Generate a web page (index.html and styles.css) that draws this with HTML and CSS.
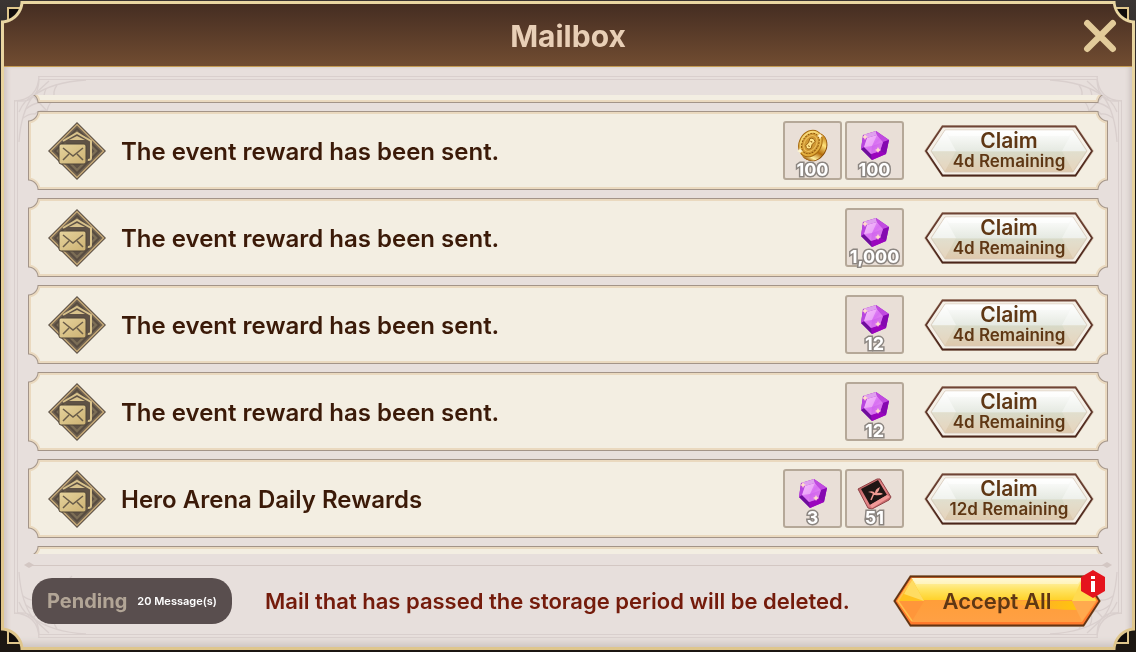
FILE: index.html
```html
<!DOCTYPE html>
<html lang="en">
<head>
    <meta charset="UTF-8">
    <meta name="viewport" content="width=device-width, initial-scale=1.0">
    <title>Mailbox</title>
    <link rel="stylesheet" href="styles.css">
</head>
<body>
    <!-- Shared icons -->
    <svg class="sprite" width="0" height="0" aria-hidden="true">
        <defs>
            <linearGradient id="gold-fill" x1="0" y1="0" x2="1" y2="1">
                <stop offset="0" stop-color="#e6d39d"/>
                <stop offset="1" stop-color="#cdb273"/>
            </linearGradient>
            <linearGradient id="coin-edge" x1="0" y1="0" x2="0" y2="1">
                <stop offset="0" stop-color="#c07a10"/>
                <stop offset="0.3" stop-color="#ffe27a"/>
                <stop offset="0.6" stop-color="#b56d0c"/>
                <stop offset="0.85" stop-color="#fff0a0"/>
                <stop offset="1" stop-color="#9a5606"/>
            </linearGradient>
            <linearGradient id="coin-face" x1="0" y1="0" x2="1" y2="1">
                <stop offset="0" stop-color="#ffe88a"/>
                <stop offset="1" stop-color="#d99a26"/>
            </linearGradient>
            <linearGradient id="gem-face" x1="0" y1="0" x2="1" y2="1">
                <stop offset="0" stop-color="#f2b0fb"/>
                <stop offset="0.5" stop-color="#d870f2"/>
                <stop offset="1" stop-color="#f0a4f0"/>
            </linearGradient>
            <linearGradient id="ticket-edge" x1="0" y1="0" x2="1" y2="1">
                <stop offset="0" stop-color="#a94d50"/>
                <stop offset="0.5" stop-color="#e98a8c"/>
                <stop offset="1" stop-color="#b24f55"/>
            </linearGradient>
            <linearGradient id="claim-fill" x1="0" y1="0" x2="0" y2="1">
                <stop offset="0" stop-color="#ffffff"/>
                <stop offset="0.5" stop-color="#e5e9e1"/>
                <stop offset="0.52" stop-color="#d8dac8"/>
                <stop offset="1" stop-color="#dfc9ac"/>
            </linearGradient>
            <linearGradient id="claim-line" x1="0" y1="0" x2="0" y2="1">
                <stop offset="0" stop-color="#6f4435"/>
                <stop offset="1" stop-color="#4a251a"/>
            </linearGradient>
            <linearGradient id="accept-fill" x1="0" y1="0" x2="0" y2="1">
                <stop offset="0" stop-color="#fff4c4"/>
                <stop offset="0.25" stop-color="#ffe566"/>
                <stop offset="0.5" stop-color="#ffd22a"/>
                <stop offset="0.51" stop-color="#ff9e3a"/>
                <stop offset="1" stop-color="#ffa044"/>
            </linearGradient>
            <linearGradient id="accept-shine" x1="0" y1="0" x2="1" y2="0">
                <stop offset="0" stop-color="#ffd000" stop-opacity="0"/>
                <stop offset="1" stop-color="#ffd000"/>
            </linearGradient>
        </defs>

        <symbol id="icon-mail" viewBox="0 0 60 60">
            <path d="M30 1L59 30 30 59 1 30z" fill="#5c5046"/>
            <path d="M30 3.500L56.500 30 30 56.500 3.500 30z" fill="#6b5e4f" stroke="#c4a877" stroke-width="1.500"/>
            <path d="M30 7.500L52.500 30 30 52.500 7.500 30z" fill="#5f5245" stroke="#4f4439"/>
            <path d="M30 11L49 30 30 49 11 30z" fill="none" stroke="#7d6f56" stroke-width="2"/>
            <path d="M16 20L30 12 44 20v17q0 2-3 2" fill="#5f5245" stroke="#d8c28b" stroke-width="2"/>
            <path d="M22 19l8-4 8 4z" fill="#d8c28b"/>
            <rect x="12" y="23" width="27" height="20" rx="2" fill="url(#gold-fill)" stroke="#4f4439"/>
            <path d="M16 27l10 8 10-8M16 39l6-6M36 39l-6-6" fill="none" stroke="#695c49" stroke-width="1.500"/>
        </symbol>

        <symbol id="icon-coin" viewBox="0 0 59 59">
            <g transform="rotate(30 30 24)">
                <ellipse cx="32" cy="25" rx="12.500" ry="15" fill="#8a4c05"/>
                <ellipse cx="31" cy="25" rx="12.500" ry="15" fill="url(#coin-edge)"/>
                <ellipse cx="27" cy="24" rx="11" ry="14" fill="url(#coin-face)" stroke="#a76a10"/>
                <ellipse cx="27" cy="24" rx="8" ry="11" fill="#cf9733" stroke="#8f560b" stroke-dasharray="2 1"/>
                <ellipse cx="27" cy="24" rx="6" ry="8.500" fill="none" stroke="#edc05c"/>
                <path d="M24 20q3-3 6 0l-1 4 1 4q-3 4-6 0l1-4z" fill="#ffe58a" stroke="#8f560b" stroke-width="0.800"/>
                <path d="M26 22h2M26 27h2" stroke="#8f560b"/>
            </g>
            <path d="M17 27l1 2 2 1-2 1-1 2-1-2-2-1 2-1zM37 12l1 2 2 1-2 1-1 2-1-2-2-1 2-1z" fill="#fff6cf"/>
        </symbol>

        <symbol id="icon-gem" viewBox="0 0 59 59">
            <path d="M18 14L31 10 44 19 41 33 27 39 16 28z" fill="#a116c8"/>
            <path d="M18 14L31 10 32 14 22 17z" fill="#dfa0ee"/>
            <path d="M31 10L44 19 38 21 32 14z" fill="#c04be0"/>
            <path d="M44 19L41 33 35 30 38 21z" fill="#8509b0"/>
            <path d="M41 33L27 39 26 33 35 30z" fill="#9a05bd"/>
            <path d="M27 39L16 28 19 26 26 33z" fill="#6e0f9b"/>
            <path d="M16 28L18 14 22 17 19 26z" fill="#b845df"/>
            <path d="M22 17L32 14 38 21 35 30 26 33 19 26z" fill="url(#gem-face)"/>
            <path d="M22 17L32 14 27 25 19 26z" fill="#f7c5fb" opacity="0.600"/>
            <path d="M27 25L38 21 35 30 26 33z" fill="#c553e8" opacity="0.400"/>
            <path d="M20 13l1 2 2 1-2 1-1 2-1-2-2-1 2-1zM33 26l1 2 2 1-2 1-1 2-1-2-2-1 2-1z" fill="#ffdccb"/>
        </symbol>

        <symbol id="icon-ticket" viewBox="0 0 59 59">
            <path d="M13 20L32 10 35 10 46 28 44 31 27 40 23 39z" fill="url(#ticket-edge)" stroke="#8f4346"/>
            <path d="M16 20L33 11 42 26 25 36z" fill="#1f1514"/>
            <path d="M25 36L42 26 45 28 27 39z" fill="#f09a98"/>
            <path d="M29 26q-1-2-6-3 5-2 7 1 0-4 5-6-1 4-3 6 4-1 6 1-4 2-8 1z" fill="#f09a93"/>
            <path d="M29 24l-3 7" stroke="#f09a93" stroke-width="1.500"/>
        </symbol>

        <symbol id="claim-shape" viewBox="0 0 172 54">
            <path d="M19 1H153L171 27 153 53H19L1 27z" fill="#d4c3b1"/>
            <path d="M19.500 2.500H152.500L169 27 152.500 51.500H19.500L3 27z" fill="#f5f0e7" stroke="url(#claim-line)" stroke-width="1.800"/>
            <path d="M22 6H150L164 27 150 48H22L8 27z" fill="url(#claim-fill)" stroke="#d5c7b8" stroke-width="0.800"/>
            <path d="M22 7L33 27H9z" fill="#fff" opacity="0.450"/>
            <path d="M150 7L139 27H163z" fill="#fff" opacity="0.350"/>
            <path d="M9 27H33L22 47zM163 27H139L150 47z" fill="#f3e9da" opacity="0.350"/>
            <path d="M22 6H150L146 12H26z" fill="#fff" opacity="0.500"/>
        </symbol>

        <symbol id="accept-shape" viewBox="0 0 210 54">
            <path d="M18 1H192L209 27 192 53H18L1 27z" fill="#cbbba5"/>
            <path d="M18.500 2.500H191.500L207.500 27 191.500 51.500H18.500L2.500 27z" fill="#ff7a2c" stroke="#633414" stroke-width="1.800"/>
            <path d="M20 4H190L205 27 190 48H20L5 27z" fill="url(#accept-fill)"/>
            <path d="M110 27H184L188 36Q150 36 110 27z" fill="url(#accept-shine)" opacity="0.800"/>
            <path d="M20 5L32 27H6z" fill="#ffc21f"/>
            <path d="M20 5L32 27 12 20z" fill="#ffdc62"/>
            <path d="M6 27H32L20 47z" fill="#ff963a"/>
            <path d="M190 5L180 27H204z" fill="#ffda50"/>
            <path d="M204 27H180L190 47z" fill="#ffaa4e"/>
            <path d="M20 5L6 27 20 47" fill="none" stroke="#ffc04c" stroke-width="1.500"/>
            <path d="M20 4H190L186 10H24z" fill="#fffbe5" opacity="0.500"/>
        </symbol>

        <symbol id="web-corner" viewBox="0 0 100 100">
            <g fill="none" stroke="#d9cfcd" stroke-width="1.300">
                <path d="M25 0Q24 24 0 25M25 4Q24 27 4 25"/>
                <path d="M19 20Q38 6 72 4M19 20Q7 36 5 66"/>
                <path d="M19 20L58 62M19 20Q26 13 35 5M19 20Q10 24 5 36"/>
                <path d="M43 9Q38 16 41 23 35 26 33 35 26 33 21 38 16 37 9 42"/>
                <path d="M32 13Q29 19 31 24 27 28 24 27 18 28 12 33"/>
            </g>
        </symbol>
    </svg>

    <main class="window">
        <header class="title-bar">
            <h1>Mailbox</h1>
            <button class="close-btn" aria-label="Close">
                <svg viewBox="0 0 32 32"><path d="M4 4L28 28M28 4L4 28" stroke="#e2cb9a" stroke-width="6" stroke-linecap="round"/></svg>
            </button>
        </header>

        <div class="panel">
            <div class="frame" aria-hidden="true">
                <svg class="web top-left"><use href="#web-corner"/></svg>
                <svg class="web top-right"><use href="#web-corner"/></svg>
                <svg class="web bottom-left"><use href="#web-corner"/></svg>
                <svg class="web bottom-right"><use href="#web-corner"/></svg>
            </div>

            <ul class="mail-list">
                <li class="mail" aria-hidden="true"></li>
                <li class="mail">
                    <svg class="mail-icon"><use href="#icon-mail"/></svg>
                    <h2>The event reward has been sent.</h2>
                    <div class="rewards">
                        <div class="reward"><svg><use href="#icon-coin"/></svg><span>100</span></div>
                        <div class="reward"><svg><use href="#icon-gem"/></svg><span>100</span></div>
                    </div>
                    <button class="claim-btn">
                        <svg class="btn-shape"><use href="#claim-shape"/></svg>
                        <span class="btn-label">Claim</span>
                        <span class="btn-time">4d Remaining</span>
                    </button>
                </li>
                <li class="mail">
                    <svg class="mail-icon"><use href="#icon-mail"/></svg>
                    <h2>The event reward has been sent.</h2>
                    <div class="rewards">
                        <div class="reward"><svg><use href="#icon-gem"/></svg><span>1,000</span></div>
                    </div>
                    <button class="claim-btn">
                        <svg class="btn-shape"><use href="#claim-shape"/></svg>
                        <span class="btn-label">Claim</span>
                        <span class="btn-time">4d Remaining</span>
                    </button>
                </li>
                <li class="mail">
                    <svg class="mail-icon"><use href="#icon-mail"/></svg>
                    <h2>The event reward has been sent.</h2>
                    <div class="rewards">
                        <div class="reward"><svg><use href="#icon-gem"/></svg><span>12</span></div>
                    </div>
                    <button class="claim-btn">
                        <svg class="btn-shape"><use href="#claim-shape"/></svg>
                        <span class="btn-label">Claim</span>
                        <span class="btn-time">4d Remaining</span>
                    </button>
                </li>
                <li class="mail">
                    <svg class="mail-icon"><use href="#icon-mail"/></svg>
                    <h2>The event reward has been sent.</h2>
                    <div class="rewards">
                        <div class="reward"><svg><use href="#icon-gem"/></svg><span>12</span></div>
                    </div>
                    <button class="claim-btn">
                        <svg class="btn-shape"><use href="#claim-shape"/></svg>
                        <span class="btn-label">Claim</span>
                        <span class="btn-time">4d Remaining</span>
                    </button>
                </li>
                <li class="mail">
                    <svg class="mail-icon"><use href="#icon-mail"/></svg>
                    <h2>Hero Arena Daily Rewards</h2>
                    <div class="rewards">
                        <div class="reward"><svg><use href="#icon-gem"/></svg><span>3</span></div>
                        <div class="reward"><svg><use href="#icon-ticket"/></svg><span>51</span></div>
                    </div>
                    <button class="claim-btn">
                        <svg class="btn-shape"><use href="#claim-shape"/></svg>
                        <span class="btn-label">Claim</span>
                        <span class="btn-time">12d Remaining</span>
                    </button>
                </li>
                <li class="mail" aria-hidden="true"></li>
            </ul>

            <div class="divider"></div>

            <footer>
                <div class="pending">
                    <span class="pending-label">Pending</span>
                    <span class="pending-count">20 Message(s)</span>
                </div>
                <p class="notice">Mail that has passed the storage period will be deleted.</p>
                <button class="accept-btn">
                    <svg class="btn-shape"><use href="#accept-shape"/></svg>
                    <span class="btn-label">Accept All</span>
                    <svg class="badge" viewBox="0 0 26 30">
                        <path d="M13 1L25 8V22L13 29 1 22V8z" fill="#e5141d"/>
                        <path d="M11 7h4v3h-4zM11 12h4v11h-4z" fill="#fff"/>
                    </svg>
                </button>
            </footer>
        </div>
    </main>
</body>
</html>
```
FILE: styles.css
```css
:root {
    --gold: #dfc68c;
    --panel: #e7dfdc;
    --cream: #f3eee2;
    --line: #d9cfcd;
    --brown: #3b1a08;
    --btn-text: #5f3714;
}

* {
    margin: 0;
    padding: 0;
    box-sizing: border-box;
}

body {
    font-family: Inter, "Open Sans", sans-serif;
    background: linear-gradient(#3b3533, #14110f 30%, #1c1712);
    height: 100vh;
    padding: 1px 1px 2px;
    color: var(--brown);
}

button {
    border: none;
    background: none;
    font-family: inherit;
    cursor: pointer;
}

.sprite {
    position: absolute;
}

/* Window: small gold squares sit behind the cut corners */
.window {
    position: relative;
    display: flex;
    flex-direction: column;
    height: 100%;
    min-width: 900px;
    isolation: isolate;
}

.window::before {
    content: "";
    position: absolute;
    inset: 6px;
    border: 2px solid var(--gold);
    background: #100c0b;
    z-index: -2;
}

.window::after {
    content: "";
    position: absolute;
    inset: 0;
    z-index: -1;
    background: linear-gradient(#e9d6a2, var(--gold));
    mask: radial-gradient(circle at 20px 20px, transparent 19px, #000 20px) -20px -20px / 100% 100%;
}

.title-bar,
.panel {
    margin: 0 3px;
}

.title-bar {
    position: relative;
    display: flex;
    align-items: center;
    justify-content: center;
    height: 63px;
    margin-top: 3px;
    padding-top: 2px;
    background: linear-gradient(#452d22, #714c31);
    border-bottom: 1px solid #c49b54;
    mask: radial-gradient(circle at -3px -3px, transparent 22px, #000 23px) left / 51% 100% no-repeat,
        radial-gradient(circle at calc(100% + 3px) -3px, transparent 22px, #000 23px) right / 51% 100% no-repeat;
}

h1 {
    font-size: 30px;
    line-height: 36px;
    font-weight: 700;
    color: #e8cfb6;
}

.close-btn {
    position: absolute;
    right: 15px;
    top: 15px;
    width: 34px;
    height: 34px;
}

.close-btn svg {
    display: block;
    width: 100%;
}

.panel {
    position: relative;
    flex: 1;
    min-height: 0;
    display: flex;
    flex-direction: column;
    margin-bottom: 3px;
    padding: 28px 24px 19px;
    background: var(--panel);
    box-shadow: inset 0 -4px 6px #cfc6c2, inset 5px 0 5px -3px #cfc6c2, inset -5px 0 5px -3px #cfc6c2;
    mask: radial-gradient(circle at -3px calc(100% + 3px), transparent 22px, #000 23px) left / 51% 100% no-repeat,
        radial-gradient(circle at calc(100% + 3px) calc(100% + 3px), transparent 22px, #000 23px) right / 51% 100% no-repeat;
}

/* Engraved frame */
.frame {
    position: absolute;
    inset: 9px 10px;
}

.frame::before,
.frame::after {
    content: "";
    position: absolute;
    border: 0 double var(--line);
}

.frame::before {
    inset: 24px 0;
    border-width: 0 4px;
}

.frame::after {
    inset: 0 24px;
    border-width: 4px 0;
}

.web {
    position: absolute;
    width: 100px;
    height: 100px;
}

.top-left {
    top: 0;
    left: 0;
}

.top-right {
    top: 0;
    right: 0;
    transform: scaleX(-1);
}

.bottom-left {
    bottom: 0;
    left: 0;
    transform: scaleY(-1);
}

.bottom-right {
    bottom: 0;
    right: 0;
    transform: scale(-1);
}

/* Mail list */
.mail-list {
    position: relative;
    flex: 1;
    min-height: 0;
    display: flex;
    flex-direction: column;
    justify-content: center;
    gap: 8px;
    overflow: hidden;
    list-style: none;
}

.mail {
    position: relative;
    flex: none;
    display: flex;
    align-items: center;
    height: 79px;
    padding: 0 13px 0 19px;
    background: #a39488;
    mask: radial-gradient(circle at 10px 10px, transparent 9px, #000 10px) -10px -10px / 100% 100%;
}

.mail::before,
.mail::after {
    content: "";
    position: absolute;
}

.mail::before {
    inset: 1px;
    background: #ead9bf;
    mask: radial-gradient(circle at 11px 11px, transparent 10px, #000 11px) -12px -12px / calc(100% + 2px) calc(100% + 2px);
}

.mail::after {
    inset: 3px;
    background: var(--cream);
    mask: radial-gradient(circle at 13px 13px, transparent 12px, #000 13px) -16px -16px / calc(100% + 6px) calc(100% + 6px);
}

.mail > * {
    position: relative;
    z-index: 1;
}

.mail-icon {
    width: 60px;
    height: 60px;
    margin-right: 14px;
}

h2 {
    flex: 1;
    padding-top: 3px;
    font-size: 24px;
    line-height: 28px;
    font-weight: 600;
}

.rewards {
    display: flex;
    gap: 3px;
    margin-right: 19px;
}

.reward {
    position: relative;
    width: 59px;
    height: 59px;
    background: #e9dfd7;
    border: 2px solid #b5a898;
    border-radius: 3px;
}

.reward svg {
    position: absolute;
    inset: -2px;
    width: 59px;
    height: 59px;
}

.reward span {
    position: absolute;
    right: -4px;
    bottom: -3px;
    left: -4px;
    font-size: 18px;
    line-height: 22px;
    font-weight: 700;
    text-align: center;
    color: #fff;
    -webkit-text-stroke: 3px #8b8580;
    paint-order: stroke fill;
}

.claim-btn,
.accept-btn {
    position: relative;
    display: flex;
    flex-direction: column;
    align-items: center;
    justify-content: center;
    flex: none;
    height: 54px;
    color: var(--btn-text);
}

.claim-btn {
    width: 172px;
}

.accept-btn {
    width: 210px;
    margin-left: auto;
}

.btn-shape {
    position: absolute;
    inset: 0;
    width: 100%;
    height: 100%;
}

.btn-label,
.btn-time {
    position: relative;
    font-weight: 600;
}

.btn-label {
    font-size: 21px;
    line-height: 20px;
}

.btn-time {
    font-size: 17px;
    line-height: 20px;
}

/* Footer */
.divider {
    position: relative;
    height: 1px;
    margin: 11px 0 8px;
    background: #d3c7c3;
}

.divider::before,
.divider::after {
    content: "";
    position: absolute;
    top: -3px;
    width: 10px;
    height: 6px;
    background: #d3c7c3;
    clip-path: polygon(0 50%, 50% 0, 100% 50%, 50% 100%);
}

.divider::before {
    left: -4px;
}

.divider::after {
    right: -4px;
}

footer {
    position: relative;
    display: flex;
    align-items: center;
    padding: 0 6px 0 4px;
}

.pending {
    display: flex;
    align-items: center;
    justify-content: center;
    gap: 10px;
    width: 200px;
    height: 46px;
    margin-right: 33px;
    border-radius: 20px;
    background: #594e4e;
}

.pending-label {
    font-size: 20px;
    font-weight: 700;
    color: #b2a596;
}

.pending-count {
    font-size: 11px;
    font-weight: 600;
    color: #fff;
}

.notice {
    font-size: 22px;
    line-height: 28px;
    font-weight: 600;
    color: #741b0b;
    white-space: nowrap;
}

.accept-btn .btn-label {
    font-size: 22px;
}

.badge {
    position: absolute;
    top: -5px;
    right: -4px;
    width: 26px;
    height: 30px;
}
```
